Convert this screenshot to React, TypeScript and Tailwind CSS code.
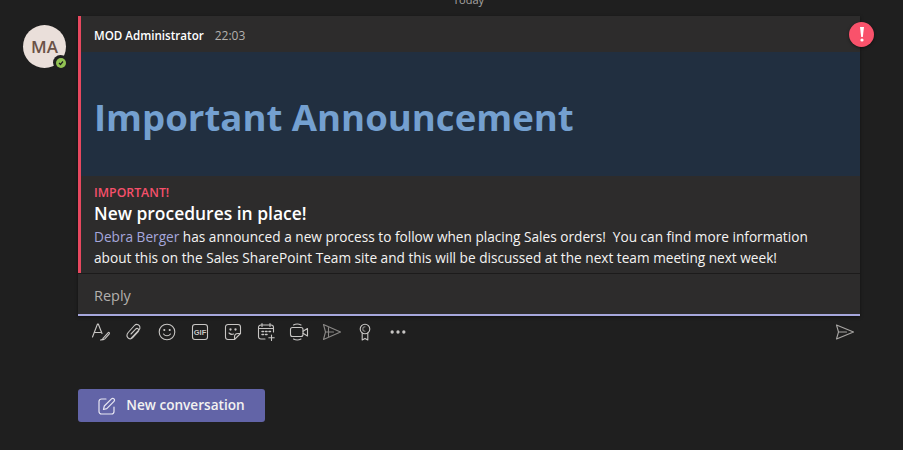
import { MoreHorizontal } from "lucide-react";

const font = { fontFamily: '"Open Sans", "Noto Sans", sans-serif' };

const Icon = ({ children, stroke = "#c8c6c4" }: { children: React.ReactNode; stroke?: string }) => (
  <svg
    width="20"
    height="20"
    viewBox="0 0 20 20"
    fill="none"
    stroke={stroke}
    strokeWidth="1.100"
    strokeLinecap="round"
    strokeLinejoin="round"
  >
    {children}
  </svg>
);

const toolbar = [
  <Icon key="format">
    <path d="M1.500 15 6.500 2h.8L11 11.500M3.500 10.500h6" />
    <path d="M9.500 18c1.800 0 2.500-.8 3-2.200l4.500-5c.8-.8 2-.1 1.300 1l-4.500 5c-1 1-2.800 1.200-4.300 1.200Z" />
  </Icon>,
  <Icon key="attach">
    <path d="M7 16.500 15 8c1.800-2 .8-4.500-.8-5.300-1.300-.6-2.800-.3-3.800.8l-6.200 7c-1.500 1.800-1.500 3.800-.4 5.200 1.300 1.600 3.500 1.500 4.900 0l5.300-5.800c1-1.100.9-2.300.2-3-.8-.7-1.900-.5-2.800.5L7 12" />
  </Icon>,
  <Icon key="emoji">
    <circle cx="10" cy="10" r="7.800" />
    <circle cx="7.300" cy="8" r=".5" fill="#c8c6c4" />
    <circle cx="12.700" cy="8" r=".5" fill="#c8c6c4" />
    <path d="M6.500 12c1.800 2.300 5.200 2.300 7 0" />
  </Icon>,
  <Icon key="gif">
    <rect x="2.500" y="2.500" width="15" height="15" rx="2.500" />
    <text x="10" y="12.800" textAnchor="middle" fontSize="7.500" fontWeight="700" fill="#c8c6c4" stroke="none" style={{ fontFamily: '"Liberation Sans", sans-serif' }}>
      GIF
    </text>
  </Icon>,
  <Icon key="sticker">
    <path d="M11.500 17.500H5a2.500 2.500 0 0 1-2.500-2.500V5A2.500 2.500 0 0 1 5 2.500h10A2.500 2.500 0 0 1 17.500 5v6.500Z" />
    <path d="M11.500 17.500v-2.500c0-2 1.500-3.500 3.500-3.500h2.500" />
    <circle cx="7.500" cy="7.500" r=".6" fill="#c8c6c4" />
    <circle cx="12.500" cy="7.500" r=".6" fill="#c8c6c4" />
    <path d="M6 11c1.300 1.300 3 1.600 4.500 1" />
  </Icon>,
  <Icon key="meet">
    <path d="M9 17H5a2.500 2.500 0 0 1-2.500-2.500V5.500A2.500 2.500 0 0 1 5 3h10a2.500 2.500 0 0 1 2.500 2.500V10" />
    <path d="M6 1.500V4.500M14 1.500V4.500M2.500 6.500h15" />
    <path d="M6 9.500h1.500M9.500 9.500H11M13 9.500h1.500M6 12.500h1.500M9.500 12.500H11" strokeWidth="1.500" />
    <path d="M15.500 13v5.500M12.800 15.800h5.400" />
  </Icon>,
  <Icon key="video">
    <rect x="1.500" y="5.500" width="12.500" height="9" rx="2" />
    <path d="M14 9.200 18.500 6.500v7.500L14 11.300" />
    <path d="M4.500 3c2.200-1.100 5.300-1.100 7.500 0M4.500 17c2.200 1.100 5.300 1.100 7.500 0" />
  </Icon>,
  <Icon key="stream" stroke="#8a8886">
    <path d="M1.500 2.500 18.500 10 1.500 17.500l2-7.500-2-7.500Z" />
    <path d="M3.500 10h8" />
    <path d="M6.500 5.500v9" />
  </Icon>,
  <Icon key="praise">
    <circle cx="10" cy="7" r="4.800" />
    <path d="M7.200 11v7l2.800-1.600 2.800 1.600v-7" />
    <path d="M10 4.800a2.200 2.200 0 1 0 0 4.400" stroke="#8a8886" />
  </Icon>,
];

export default function App() {
  return (
    <div className="h-[450px] w-[903px] overflow-hidden bg-[#1f1f1f]" style={font}>
      <div className="-mt-[8px] mb-[8px] ml-[453px] h-[16px] text-[11px] leading-[16px] text-[#a8a6a4]">Today</div>

      <div className="flex pl-[23px] pr-[43px]">
        <div className="relative mt-[9px] mr-[12px] h-[43px] w-[43px] shrink-0">
          <div className="flex h-[43px] w-[43px] items-center justify-center rounded-full bg-[#eadfda] text-[17px] font-semibold text-[#6b5247]">
            MA
          </div>
          <div className="absolute bottom-[-2px] right-[-2px] flex h-[15px] w-[15px] items-center justify-center rounded-full bg-[#1f1f1f]">
            <div className="flex h-[10px] w-[10px] items-center justify-center rounded-full bg-[#92c353]">
              <svg width="6" height="6" viewBox="0 0 6 6" fill="none" stroke="#1f1f1f" strokeWidth="1.200">
                <path d="M1 3l1.500 1.500L5 1.500" />
              </svg>
            </div>
          </div>
        </div>

        <div className="relative flex-1">
          <div className="bg-[#2d2c2c] shadow-[0_1px_3px_rgba(0,0,0,0.5)]">
            <div className="border-l-[3px] border-[#e8485f]">
              <div className="flex h-[36px] items-center gap-[11px] pl-[13px] pt-[3px]">
                <span className="text-[11.600px] font-semibold text-white">MOD Administrator</span>
                <span className="text-[12px] text-[#b3b0ad]">22:03</span>
              </div>

              <div className="flex h-[124px] items-center bg-[#212f40] pl-[13px] pt-[6px]">
                <h1 className="text-[36.600px] font-bold text-[#74a0d0]">Important Announcement</h1>
              </div>

              <div className="h-[97px] pl-[13px] pt-[8px]">
                <div className="text-[12.300px] font-semibold leading-[17px] text-[#f6506b]">IMPORTANT!</div>
                <div className="text-[17.450px] font-semibold leading-[25px] text-white">New procedures in place!</div>
                <p className="text-[13.650px] leading-[21px] text-[#f5f4f3]">
                  <span className="text-[#a6a7dc]">Debra Berger</span> has announced a new process to follow when placing Sales orders!&nbsp; You can find more information
                  <br />
                  about this on the Sales SharePoint Team site and this will be discussed at the next team meeting next week!
                </p>
              </div>
            </div>

            <div className="flex h-[43px] items-center border-t border-b-2 border-t-[#1c1b1b] border-b-[#a6a7dc] pl-[16px] pt-[3px] text-[14.500px] text-[#b3b0ad]">
              Reply
            </div>
          </div>

          <div className="absolute right-[-14px] top-[6px] flex h-[25px] w-[25px] items-center justify-center rounded-full bg-[#f9526b] shadow-[0_1px_3px_rgba(0,0,0,0.5)]">
            <svg width="6" height="15" viewBox="0 0 6 15" fill="white">
              <path d="M1 0h4L3.800 10H2.200L1 0Z" />
              <circle cx="3" cy="13" r="1.600" />
            </svg>
          </div>

          <div className="mt-[4px] flex h-[24px] items-center pl-[13px] pr-[5px]">
            <div className="flex items-center gap-[13px]">
              {toolbar}
              <MoreHorizontal size={20} strokeWidth={2} color="#c8c6c4" />
            </div>
            <div className="ml-auto">
              <Icon stroke="#a8a6a4">
                <path d="M1.500 3 18.500 10 1.500 17l2-7-2-7Z" />
                <path d="M3.500 10h8" />
              </Icon>
            </div>
          </div>

          <button
            type="button"
            className="mt-[45px] flex h-[33px] w-[187px] items-center justify-center gap-[10px] rounded-[3px] bg-[#6264a7] text-[13.600px] font-semibold text-[#f3f2f1]"
          >
            <svg width="18" height="18" viewBox="0 0 18 18" fill="none" stroke="#e8e7f3" strokeWidth="1.200" strokeLinecap="round" strokeLinejoin="round">
              <path d="M8 2H3.500A2.500 2.500 0 0 0 1 4.500v10A2.500 2.500 0 0 0 3.500 17h10a2.500 2.500 0 0 0 2.500-2.500V10" />
              <path d="M5.500 12.500l.8-3.500 7.200-7.200a1.700 1.700 0 0 1 2.500 2.500L8.800 11.700l-3.300.8Z" />
            </svg>
            New conversation
          </button>
        </div>
      </div>
    </div>
  );
}
